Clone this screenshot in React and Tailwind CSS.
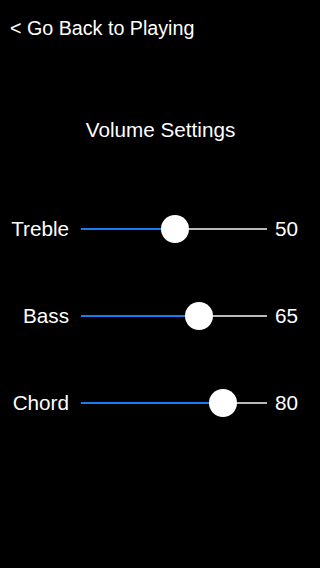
import React from "react";

const rows = [
  { label: "Treble", value: 50 },
  { label: "Bass", value: 65 },
  { label: "Chord", value: 80 },
];

function Slider({ value }) {
  const pct = value / 100;
  return (
    <div className="relative w-[186px] h-[28px] flex items-center">
      <div className="flex w-full h-[2px]">
        <div className="h-full bg-[#1a7cf5]" style={{ width: `${14 + pct * 160}px` }} />
        <div className="h-full flex-1 bg-[#b8b8b8]" />
      </div>
      <div
        className="absolute top-0 w-[28px] h-[28px] rounded-full bg-white"
        style={{ left: `${pct * 160}px` }}
      />
    </div>
  );
}

export default function App() {
  return (
    <div
      className="w-[320px] h-[568px] bg-black text-white flex flex-col"
      style={{ fontFamily: '"Liberation Sans", Arial, sans-serif' }}
    >
      <div className="pl-[10px] pt-[16px] h-[24px] text-[19.7px] leading-[24px] box-content">
        &lt; Go Back to Playing
      </div>
      <div className="mt-[78px] text-center text-[20.7px] leading-[24px] pl-[1px]">
        Volume Settings
      </div>
      <div className="mt-[73px] flex flex-col gap-[59px]">
        {rows.map((r) => (
          <div key={r.label} className="flex items-center h-[28px]">
            <div className="w-[69px] text-right text-[20.7px] leading-[24px]">{r.label}</div>
            <div className="ml-[12px]">
              <Slider value={r.value} />
            </div>
            <div className="ml-[8px] text-[20.7px] leading-[24px]">{r.value}</div>
          </div>
        ))}
      </div>
    </div>
  );
}
